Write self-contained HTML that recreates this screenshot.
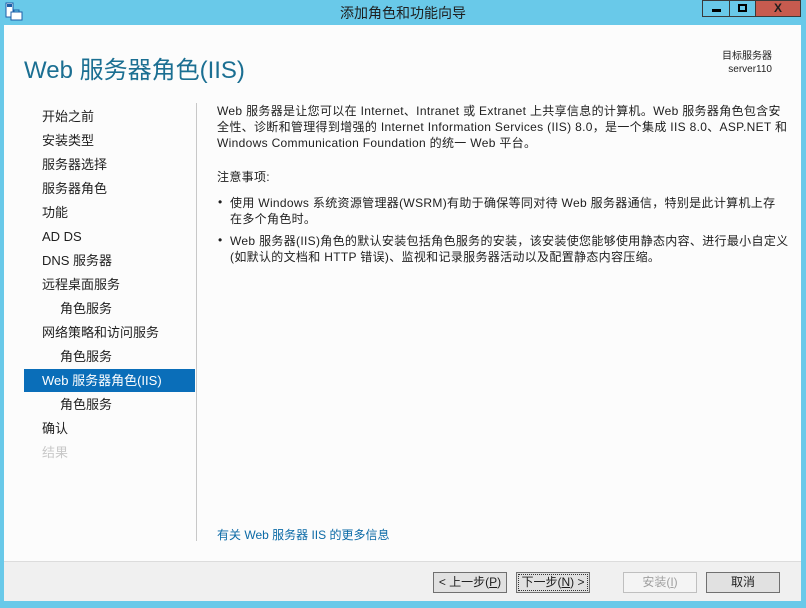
<!DOCTYPE html>
<html><head><meta charset="utf-8"><style>
*{margin:0;padding:0;box-sizing:border-box}
body{width:806px;height:608px;background:#69c9e9;position:relative;overflow:hidden;font-family:"Liberation Sans","Noto Sans CJK SC",sans-serif;font-size:12px;color:#1e1e1e}
.a{position:absolute;white-space:nowrap}
#win{position:absolute;left:4px;top:25px;width:797px;height:576px;background:#fcfcfc}
#foot{position:absolute;left:4px;top:561px;width:797px;height:40px;background:#f0f0f0;border-top:1px solid #dcdcdc}
.nav{position:absolute;left:42px;font-size:13px;line-height:16px}
.btn{position:absolute;top:572px;width:74px;height:21px;border:1px solid #707070;background:#e1e1e1;text-align:center;font-size:12px;line-height:19px}
p{line-height:16px}
.t{letter-spacing:0.32px}
</style></head><body>
<svg class="a" style="left:5px;top:2px" width="18" height="20"><rect x="1" y="1" width="7" height="14" fill="#fff" stroke="#1d5fa8"/><rect x="2" y="2" width="5" height="3" fill="#1d5fa8"/><rect x="6" y="10" width="11" height="8" fill="#fff" stroke="#1d5fa8"/><rect x="9" y="8" width="5" height="2" fill="none" stroke="#1d5fa8"/></svg>
<div class="a" style="left:0;width:806px;top:3px;text-align:center;font-size:14px">添加角色和功能向导</div>
<div class="a" style="left:702px;top:0;width:28px;height:17px;border:1px solid #3a3a3a;background:#69c9e9"><div class="a" style="left:9px;top:8px;width:9px;height:3px;background:#000"></div></div>
<div class="a" style="left:729px;top:0;width:27px;height:17px;border:1px solid #3a3a3a;background:#69c9e9"><div class="a" style="left:8px;top:3px;width:9px;height:8px;border:2px solid #000"></div></div>
<div class="a" style="left:755px;top:0;width:46px;height:17px;border:1px solid #3a3a3a;background:#c75b4f;text-align:center;font-weight:bold;font-size:12px;line-height:14px">X</div>
<div id="win"></div>
<div class="a" style="left:24px;top:50px;font-size:24px;color:#1b6f92">Web 服务器角色(IIS)</div>
<div class="a" style="left:700px;top:50px;width:72px;text-align:right;font-size:10px;line-height:13px">目标服务器<br>server110</div>
<div class="a" style="left:24px;top:369px;width:171px;height:23px;background:#0a6eb9"></div>
<div class="nav" style="top:109px">开始之前</div>
<div class="nav" style="top:133px">安装类型</div>
<div class="nav" style="top:157px">服务器选择</div>
<div class="nav" style="top:181px">服务器角色</div>
<div class="nav" style="top:205px">功能</div>
<div class="nav" style="top:229px">AD DS</div>
<div class="nav" style="top:253px">DNS 服务器</div>
<div class="nav" style="top:277px">远程桌面服务</div>
<div class="nav" style="top:301px;left:60px">角色服务</div>
<div class="nav" style="top:325px">网络策略和访问服务</div>
<div class="nav" style="top:349px;left:60px">角色服务</div>
<div class="nav" style="top:373px;color:#fff">Web 服务器角色(IIS)</div>
<div class="nav" style="top:397px;left:60px">角色服务</div>
<div class="nav" style="top:421px">确认</div>
<div class="nav" style="top:445px;color:#c8c8c8">结果</div>
<div class="a" style="left:196px;top:103px;width:1px;height:438px;background:#c8c8c8"></div>
<div class="a t" style="left:217px;top:103px">
<p>Web 服务器是让您可以在 Internet、Intranet 或 Extranet 上共享信息的计算机。Web 服务器角色包含安</p>
<p>全性、诊断和管理得到增强的 Internet Information Services (IIS) 8.0，是一个集成 IIS 8.0、ASP.NET 和</p>
<p>Windows Communication Foundation 的统一 Web 平台。</p>
</div>
<div class="a t" style="left:217px;top:169px;line-height:16px">注意事项:</div>
<div class="a" style="left:218px;top:195px">•</div>
<div class="a t" style="left:230px;top:195px"><p>使用 Windows 系统资源管理器(WSRM)有助于确保等同对待 Web 服务器通信，特别是此计算机上存</p><p>在多个角色时。</p></div>
<div class="a" style="left:218px;top:233px">•</div>
<div class="a t" style="left:230px;top:233px"><p>Web 服务器(IIS)角色的默认安装包括角色服务的安装，该安装使您能够使用静态内容、进行最小自定义</p><p>(如默认的文档和 HTTP 错误)、监视和记录服务器活动以及配置静态内容压缩。</p></div>
<div class="a" style="left:217px;top:526px;color:#0b6aa6">有关 Web 服务器 IIS 的更多信息</div>
<div id="foot"></div>
<div class="btn" style="left:433px">&lt; 上一步(<u>P</u>)</div>
<div class="btn" style="left:516px;outline:1px dotted #333;outline-offset:-3px">下一步(<u>N</u>) &gt;</div>
<div class="btn" style="left:623px;background:#f4f4f4;border-color:#bfbfbf;color:#a0a0a0">安装(<u>I</u>)</div>
<div class="btn" style="left:706px">取消</div>
</body></html>
